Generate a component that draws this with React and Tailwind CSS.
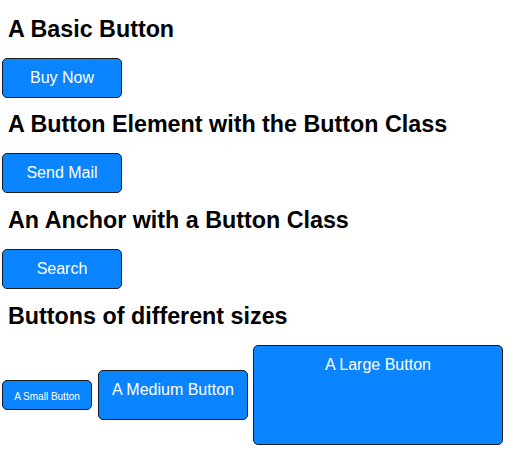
const btn =
  'flex justify-center items-start bg-[#0a84ff] text-white border border-[#1c1c1c] rounded-[5px] text-center text-[16px] leading-[18px] pt-[10px] box-border'

function Heading({ children, gap = 'mt-[14px]' }) {
  return (
    <h2 className={`${gap} ml-[8px] h-[26px] text-[23.3px] leading-[26px] font-bold text-black`}>
      {children}
    </h2>
  )
}

export default function App() {
  return (
    <div className="min-h-[450px] bg-white pt-[16px] font-['Liberation_Sans',Arial,sans-serif]">
      <Heading gap="mt-0">A Basic Button</Heading>
      <a className={`${btn} mt-[16px] ml-[2px] w-[120px] h-[40px]`}>Buy Now</a>

      <Heading gap="mt-[13px]">A Button Element with the Button Class</Heading>
      <button className={`${btn} mt-[16px] ml-[2px] w-[120px] h-[40px]`}>Send Mail</button>

      <Heading>An Anchor with a Button Class</Heading>
      <a className={`${btn} mt-[16px] ml-[2px] w-[120px] h-[40px]`}>Search</a>

      <Heading>Buttons of different sizes</Heading>
      <div className="mt-[16px] ml-[2px] flex items-center">
        <button className={`${btn} w-[90px] h-[30px] !text-[10px] !leading-[12px] mr-[6px]`}>A Small Button</button>
        <button className={`${btn} w-[150px] h-[50px] mr-[5px]`}>A Medium Button</button>
        <button className={`${btn} w-[250px] h-[100px]`}>A Large Button</button>
      </div>
    </div>
  )
}
